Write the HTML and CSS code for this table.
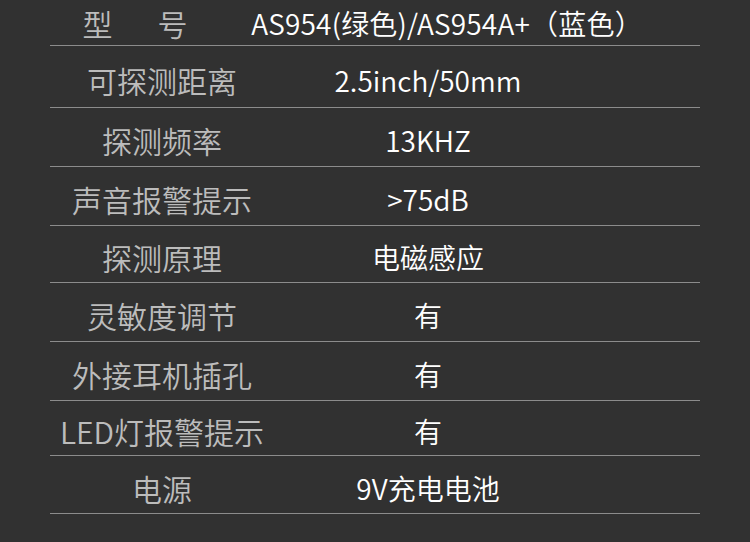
FILE: index.html
```html
<!DOCTYPE html>
<html lang="zh-CN">
<head>
  <meta charset="UTF-8">
  <title>AS954 参数</title>
  <link rel="stylesheet" href="styles.css">
</head>
<body>
  <div class="spec">
    <div class="label label-wide">型&emsp;&ensp;号</div>
    <div class="value value-wide">AS954(绿色)/AS954A+（蓝色）</div>

    <div class="label">可探测距离</div>
    <div class="value">2.5inch/50mm</div>

    <div class="label">探测频率</div>
    <div class="value">13KHZ</div>

    <div class="label">声音报警提示</div>
    <div class="value">&gt;75dB</div>

    <div class="label">探测原理</div>
    <div class="value">电磁感应</div>

    <div class="label">灵敏度调节</div>
    <div class="value">有</div>

    <div class="label">外接耳机插孔</div>
    <div class="value">有</div>

    <div class="label">LED灯报警提示</div>
    <div class="value">有</div>

    <div class="label">电源</div>
    <div class="value">9V充电电池</div>
  </div>
</body>
</html>
```

FILE: styles.css
```css
html, body {
  margin: 0;
  height: 100%;
  background: #313131;
}
body {
  font-family: "Noto Sans CJK SC", "Noto Sans", sans-serif;
  overflow: hidden;
}
.spec {
  margin: 0 50px;
  display: grid;
  grid-template-columns: 224px minmax(0, 1fr);
  grid-template-rows: 46px 62px 59px 59px 57px 59px 59px 55px 58px;
}
.label,
.value {
  display: flex;
  align-items: center;
  justify-content: center;
  min-width: 0;
  border-bottom: 1px solid #8c8c8c;
  padding-top: 6px;
  box-sizing: border-box;
  white-space: nowrap;
  font-weight: 350;
}
.label {
  color: #bcbcbc;
  font-size: 30px;
}
.label-wide {
  padding-right: 54px;
  padding-top: 0;
}
.value {
  color: #ffffff;
  font-size: 28px;
  padding-right: 118px;
}
.value-wide {
  padding-right: 80px;
  padding-top: 0;
  letter-spacing: 0.2px;
}
```
